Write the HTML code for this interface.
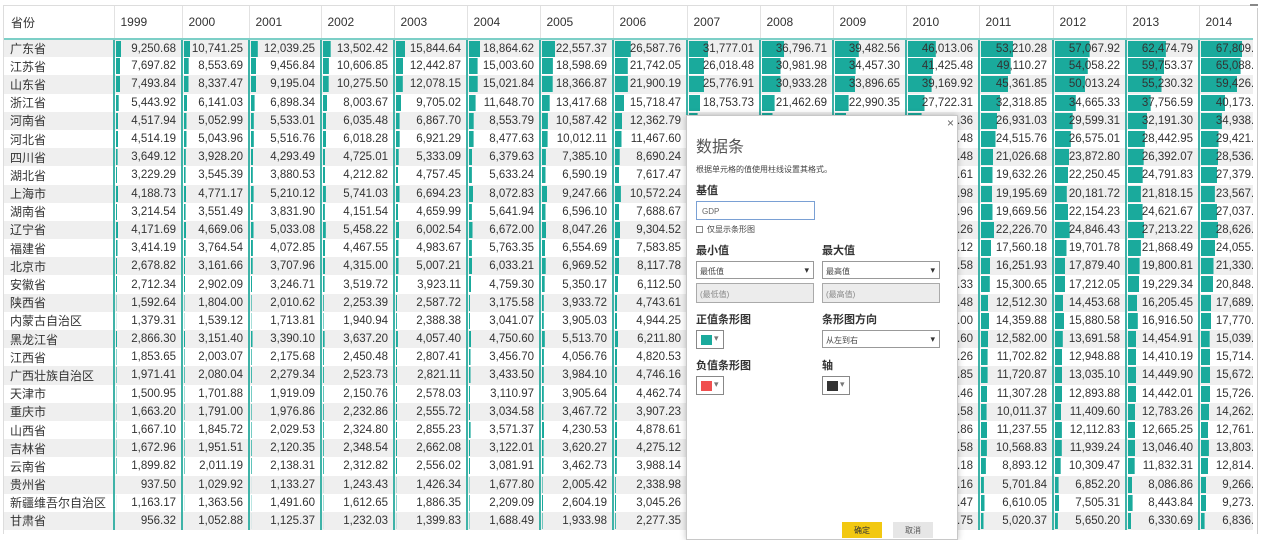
<!DOCTYPE html>
<html><head><meta charset="utf-8">
<style>
*{margin:0;padding:0;box-sizing:border-box}
body{width:1280px;height:534px;overflow:hidden;background:#fff;font-family:"Liberation Sans","Noto Sans CJK SC",sans-serif;color:#333;position:relative}
#wrap{position:absolute;left:3px;top:5px;width:1250px;height:529px;overflow:hidden;border-top:1px solid #ddd;border-left:1px solid #ddd}
table{border-collapse:collapse;table-layout:fixed;width:1267px}
th{height:33px;font-weight:normal;text-align:left;font-size:12px;padding-left:6px;border-left:1px solid #e2e2e2;border-bottom:2px solid #7ccfc7;color:#333}
th:first-child{border-left:none;padding-left:7px}
td{height:18.2px;font-size:11.5px;text-align:right;padding-right:5px;white-space:nowrap;overflow:hidden;border-left:2px solid #3fb3a8;background-repeat:no-repeat;background-position:1px 1px;background-image:linear-gradient(#1aaa9c,#1aaa9c)}
td:first-child{text-align:left;padding-left:6px;border-left:none;background-image:none;border-right:1px solid #bfe3df;font-size:12px}
tr:nth-child(even) td{background-color:#efefef}
#dlg{position:absolute;left:686px;top:115px;width:272px;height:425px;background:#fff;border:1px solid #c8c8c8;box-shadow:0 0 6px rgba(0,0,0,.25);font-size:9px;color:#444}
#dlg .a{position:absolute}
.lbl{font-size:11px;font-weight:bold;color:#333}
.sel{border:1px solid #999;height:18px;background:#fff;font-size:8px;padding:4px 0 0 3px}
.sel:after{content:"▾";position:absolute;right:4px;top:3px;font-size:9px;color:#333}
.dis{border:1px solid #aaa;height:20px;background:#ececec;font-size:8px;color:#888;padding:5px 0 0 3px}
.cp{width:28px;height:19px;border:1px solid #888;background:#fff}
.cp i{position:absolute;left:4px;top:4px;width:11px;height:10px}
.cp:after{content:"▾";position:absolute;left:17px;top:2px;font-size:9px;color:#777}
</style></head><body>
<div id="wrap">
<table id="t">
<colgroup><col style="width:110px"><col style="width:68px"><col style="width:67px"><col style="width:72px"><col style="width:73px"><col style="width:73px"><col style="width:73px"><col style="width:73px"><col style="width:74px"><col style="width:73px"><col style="width:73px"><col style="width:73px"><col style="width:73px"><col style="width:74px"><col style="width:73px"><col style="width:73px"><col style="width:73px"></colgroup>
<tr><th>省份</th><th>1999</th><th>2000</th><th>2001</th><th>2002</th><th>2003</th><th>2004</th><th>2005</th><th>2006</th><th>2007</th><th>2008</th><th>2009</th><th>2010</th><th>2011</th><th>2012</th><th>2013</th><th>2014</th></tr>
<tr><td>广东省</td><td>9,250.68</td><td>10,741.25</td><td>12,039.25</td><td>13,502.42</td><td>15,844.64</td><td>18,864.62</td><td>22,557.37</td><td>26,587.76</td><td>31,777.01</td><td>36,796.71</td><td>39,482.56</td><td>46,013.06</td><td>53,210.28</td><td>57,067.92</td><td>62,474.79</td><td>67,809.85</td></tr>
<tr><td>江苏省</td><td>7,697.82</td><td>8,553.69</td><td>9,456.84</td><td>10,606.85</td><td>12,442.87</td><td>15,003.60</td><td>18,598.69</td><td>21,742.05</td><td>26,018.48</td><td>30,981.98</td><td>34,457.30</td><td>41,425.48</td><td>49,110.27</td><td>54,058.22</td><td>59,753.37</td><td>65,088.32</td></tr>
<tr><td>山东省</td><td>7,493.84</td><td>8,337.47</td><td>9,195.04</td><td>10,275.50</td><td>12,078.15</td><td>15,021.84</td><td>18,366.87</td><td>21,900.19</td><td>25,776.91</td><td>30,933.28</td><td>33,896.65</td><td>39,169.92</td><td>45,361.85</td><td>50,013.24</td><td>55,230.32</td><td>59,426.59</td></tr>
<tr><td>浙江省</td><td>5,443.92</td><td>6,141.03</td><td>6,898.34</td><td>8,003.67</td><td>9,705.02</td><td>11,648.70</td><td>13,417.68</td><td>15,718.47</td><td>18,753.73</td><td>21,462.69</td><td>22,990.35</td><td>27,722.31</td><td>32,318.85</td><td>34,665.33</td><td>37,756.59</td><td>40,173.03</td></tr>
<tr><td>河南省</td><td>4,517.94</td><td>5,052.99</td><td>5,533.01</td><td>6,035.48</td><td>6,867.70</td><td>8,553.79</td><td>10,587.42</td><td>12,362.79</td><td>15,012.46</td><td>18,018.53</td><td>19,480.46</td><td>23,092.36</td><td>26,931.03</td><td>29,599.31</td><td>32,191.30</td><td>34,938.24</td></tr>
<tr><td>河北省</td><td>4,514.19</td><td>5,043.96</td><td>5,516.76</td><td>6,018.28</td><td>6,921.29</td><td>8,477.63</td><td>10,012.11</td><td>11,467.60</td><td>13,607.32</td><td>16,011.97</td><td>17,235.48</td><td>20,394.48</td><td>24,515.76</td><td>26,575.01</td><td>28,442.95</td><td>29,421.15</td></tr>
<tr><td>四川省</td><td>3,649.12</td><td>3,928.20</td><td>4,293.49</td><td>4,725.01</td><td>5,333.09</td><td>6,379.63</td><td>7,385.10</td><td>8,690.24</td><td>10,562.39</td><td>12,601.23</td><td>14,151.28</td><td>17,185.48</td><td>21,026.68</td><td>23,872.80</td><td>26,392.07</td><td>28,536.66</td></tr>
<tr><td>湖北省</td><td>3,229.29</td><td>3,545.39</td><td>3,880.53</td><td>4,212.82</td><td>4,757.45</td><td>5,633.24</td><td>6,590.19</td><td>7,617.47</td><td>9,333.40</td><td>11,328.92</td><td>12,961.10</td><td>15,967.61</td><td>19,632.26</td><td>22,250.45</td><td>24,791.83</td><td>27,379.22</td></tr>
<tr><td>上海市</td><td>4,188.73</td><td>4,771.17</td><td>5,210.12</td><td>5,741.03</td><td>6,694.23</td><td>8,072.83</td><td>9,247.66</td><td>10,572.24</td><td>12,494.01</td><td>14,069.86</td><td>15,046.45</td><td>17,165.98</td><td>19,195.69</td><td>20,181.72</td><td>21,818.15</td><td>23,567.70</td></tr>
<tr><td>湖南省</td><td>3,214.54</td><td>3,551.49</td><td>3,831.90</td><td>4,151.54</td><td>4,659.99</td><td>5,641.94</td><td>6,596.10</td><td>7,688.67</td><td>9,439.60</td><td>11,555.00</td><td>13,059.69</td><td>16,037.96</td><td>19,669.56</td><td>22,154.23</td><td>24,621.67</td><td>27,037.32</td></tr>
<tr><td>辽宁省</td><td>4,171.69</td><td>4,669.06</td><td>5,033.08</td><td>5,458.22</td><td>6,002.54</td><td>6,672.00</td><td>8,047.26</td><td>9,304.52</td><td>11,164.30</td><td>13,668.58</td><td>15,212.49</td><td>18,457.26</td><td>22,226.70</td><td>24,846.43</td><td>27,213.22</td><td>28,626.58</td></tr>
<tr><td>福建省</td><td>3,414.19</td><td>3,764.54</td><td>4,072.85</td><td>4,467.55</td><td>4,983.67</td><td>5,763.35</td><td>6,554.69</td><td>7,583.85</td><td>9,248.53</td><td>10,823.01</td><td>12,236.53</td><td>14,737.12</td><td>17,560.18</td><td>19,701.78</td><td>21,868.49</td><td>24,055.76</td></tr>
<tr><td>北京市</td><td>2,678.82</td><td>3,161.66</td><td>3,707.96</td><td>4,315.00</td><td>5,007.21</td><td>6,033.21</td><td>6,969.52</td><td>8,117.78</td><td>9,846.81</td><td>11,115.00</td><td>12,153.03</td><td>14,113.58</td><td>16,251.93</td><td>17,879.40</td><td>19,800.81</td><td>21,330.83</td></tr>
<tr><td>安徽省</td><td>2,712.34</td><td>2,902.09</td><td>3,246.71</td><td>3,519.72</td><td>3,923.11</td><td>4,759.30</td><td>5,350.17</td><td>6,112.50</td><td>7,360.92</td><td>8,851.66</td><td>10,062.82</td><td>12,359.33</td><td>15,300.65</td><td>17,212.05</td><td>19,229.34</td><td>20,848.75</td></tr>
<tr><td>陕西省</td><td>1,592.64</td><td>1,804.00</td><td>2,010.62</td><td>2,253.39</td><td>2,587.72</td><td>3,175.58</td><td>3,933.72</td><td>4,743.61</td><td>5,757.29</td><td>7,314.58</td><td>8,169.80</td><td>10,123.48</td><td>12,512.30</td><td>14,453.68</td><td>16,205.45</td><td>17,689.94</td></tr>
<tr><td>内蒙古自治区</td><td>1,379.31</td><td>1,539.12</td><td>1,713.81</td><td>1,940.94</td><td>2,388.38</td><td>3,041.07</td><td>3,905.03</td><td>4,944.25</td><td>6,423.18</td><td>8,496.20</td><td>9,740.25</td><td>11,672.00</td><td>14,359.88</td><td>15,880.58</td><td>16,916.50</td><td>17,770.19</td></tr>
<tr><td>黑龙江省</td><td>2,866.30</td><td>3,151.40</td><td>3,390.10</td><td>3,637.20</td><td>4,057.40</td><td>4,750.60</td><td>5,513.70</td><td>6,211.80</td><td>7,104.00</td><td>8,314.37</td><td>8,587.00</td><td>10,368.60</td><td>12,582.00</td><td>13,691.58</td><td>14,454.91</td><td>15,039.38</td></tr>
<tr><td>江西省</td><td>1,853.65</td><td>2,003.07</td><td>2,175.68</td><td>2,450.48</td><td>2,807.41</td><td>3,456.70</td><td>4,056.76</td><td>4,820.53</td><td>5,800.25</td><td>6,971.05</td><td>7,655.18</td><td>9,451.26</td><td>11,702.82</td><td>12,948.88</td><td>14,410.19</td><td>15,714.63</td></tr>
<tr><td>广西壮族自治区</td><td>1,971.41</td><td>2,080.04</td><td>2,279.34</td><td>2,523.73</td><td>2,821.11</td><td>3,433.50</td><td>3,984.10</td><td>4,746.16</td><td>5,823.41</td><td>7,021.00</td><td>7,759.16</td><td>9,569.85</td><td>11,720.87</td><td>13,035.10</td><td>14,449.90</td><td>15,672.89</td></tr>
<tr><td>天津市</td><td>1,500.95</td><td>1,701.88</td><td>1,919.09</td><td>2,150.76</td><td>2,578.03</td><td>3,110.97</td><td>3,905.64</td><td>4,462.74</td><td>5,252.76</td><td>6,719.01</td><td>7,521.85</td><td>9,224.46</td><td>11,307.28</td><td>12,893.88</td><td>14,442.01</td><td>15,726.93</td></tr>
<tr><td>重庆市</td><td>1,663.20</td><td>1,791.00</td><td>1,976.86</td><td>2,232.86</td><td>2,555.72</td><td>3,034.58</td><td>3,467.72</td><td>3,907.23</td><td>4,676.13</td><td>5,793.66</td><td>6,530.01</td><td>7,925.58</td><td>10,011.37</td><td>11,409.60</td><td>12,783.26</td><td>14,262.60</td></tr>
<tr><td>山西省</td><td>1,667.10</td><td>1,845.72</td><td>2,029.53</td><td>2,324.80</td><td>2,855.23</td><td>3,571.37</td><td>4,230.53</td><td>4,878.61</td><td>6,024.45</td><td>7,315.40</td><td>7,358.31</td><td>9,200.86</td><td>11,237.55</td><td>12,112.83</td><td>12,665.25</td><td>12,761.49</td></tr>
<tr><td>吉林省</td><td>1,672.96</td><td>1,951.51</td><td>2,120.35</td><td>2,348.54</td><td>2,662.08</td><td>3,122.01</td><td>3,620.27</td><td>4,275.12</td><td>5,284.69</td><td>6,426.10</td><td>7,278.75</td><td>8,667.58</td><td>10,568.83</td><td>11,939.24</td><td>13,046.40</td><td>13,803.14</td></tr>
<tr><td>云南省</td><td>1,899.82</td><td>2,011.19</td><td>2,138.31</td><td>2,312.82</td><td>2,556.02</td><td>3,081.91</td><td>3,462.73</td><td>3,988.14</td><td>4,772.52</td><td>5,692.12</td><td>6,169.75</td><td>7,224.18</td><td>8,893.12</td><td>10,309.47</td><td>11,832.31</td><td>12,814.59</td></tr>
<tr><td>贵州省</td><td>937.50</td><td>1,029.92</td><td>1,133.27</td><td>1,243.43</td><td>1,426.34</td><td>1,677.80</td><td>2,005.42</td><td>2,338.98</td><td>2,884.11</td><td>3,561.56</td><td>3,912.68</td><td>4,602.16</td><td>5,701.84</td><td>6,852.20</td><td>8,086.86</td><td>9,266.39</td></tr>
<tr><td>新疆维吾尔自治区</td><td>1,163.17</td><td>1,363.56</td><td>1,491.60</td><td>1,612.65</td><td>1,886.35</td><td>2,209.09</td><td>2,604.19</td><td>3,045.26</td><td>3,523.16</td><td>4,183.21</td><td>4,277.05</td><td>5,437.47</td><td>6,610.05</td><td>7,505.31</td><td>8,443.84</td><td>9,273.46</td></tr>
<tr><td>甘肃省</td><td>956.32</td><td>1,052.88</td><td>1,125.37</td><td>1,232.03</td><td>1,399.83</td><td>1,688.49</td><td>1,933.98</td><td>2,277.35</td><td>2,703.98</td><td>3,166.82</td><td>3,387.56</td><td>4,120.75</td><td>5,020.37</td><td>5,650.20</td><td>6,330.69</td><td>6,836.82</td></tr>
</table>
</div>
<div style="position:absolute;left:1257px;top:8px;width:1px;height:526px;background:#ccc"></div>
<div style="position:absolute;left:1250px;top:4px;width:8px;height:2px;background:#888"></div>

<div id="dlg">
<div class="a" style="left:260px;top:0px;font-size:12px;color:#666">×</div>
<div class="a" style="left:9px;top:17px;font-size:16px;color:#555">数据条</div>
<div class="a" style="left:9px;top:48px;font-size:8px">根据单元格的值使用柱线设置其格式。</div>
<div class="a lbl" style="left:9px;top:66px">基值</div>
<div class="a" style="left:9px;top:85px;width:119px;height:19px;border:1px solid #7aa0d4;font-size:8px;padding:5px 0 0 5px;color:#666">GDP</div>
<div class="a" style="left:9px;top:108px;font-size:8px"><span style="display:inline-block;width:7px;height:7px;border:1px solid #888;vertical-align:-1px;margin-right:4px"></span>仅显示条形图</div>
<div class="a lbl" style="left:9px;top:126px">最小值</div>
<div class="a lbl" style="left:135px;top:126px">最大值</div>
<div class="a sel" style="left:9px;top:145px;width:118px">最低值</div>
<div class="a sel" style="left:135px;top:145px;width:118px">最高值</div>
<div class="a dis" style="left:9px;top:167px;width:118px">(最低值)</div>
<div class="a dis" style="left:135px;top:167px;width:118px">(最高值)</div>
<div class="a lbl" style="left:9px;top:195px">正值条形图</div>
<div class="a lbl" style="left:135px;top:195px">条形图方向</div>
<div class="a cp" style="left:9px;top:214px"><i style="background:#1aaa9c"></i></div>
<div class="a sel" style="left:135px;top:214px;width:118px">从左到右</div>
<div class="a lbl" style="left:9px;top:241px">负值条形图</div>
<div class="a lbl" style="left:135px;top:241px">轴</div>
<div class="a cp" style="left:9px;top:260px"><i style="background:#f05050"></i></div>
<div class="a cp" style="left:135px;top:260px"><i style="background:#333"></i></div>
<div class="a" style="left:155px;top:406px;width:40px;height:16px;background:#f2c811;font-size:8px;text-align:center;padding-top:3px;color:#333">确定</div>
<div class="a" style="left:206px;top:406px;width:40px;height:16px;background:#e6e6e6;font-size:8px;text-align:center;padding-top:3px;color:#555">取消</div>
</div>
<script>
document.querySelectorAll('#t tr').forEach(function(tr){
  var cells=tr.querySelectorAll('td');
  for(var i=1;i<cells.length;i++){
    var v=parseFloat(cells[i].textContent.replace(/,/g,''));
    var w=Math.max(0,(v-1000)/1620);
    cells[i].style.backgroundSize=w.toFixed(1)+'px 16px';
  }
});
</script>
</body></html>
